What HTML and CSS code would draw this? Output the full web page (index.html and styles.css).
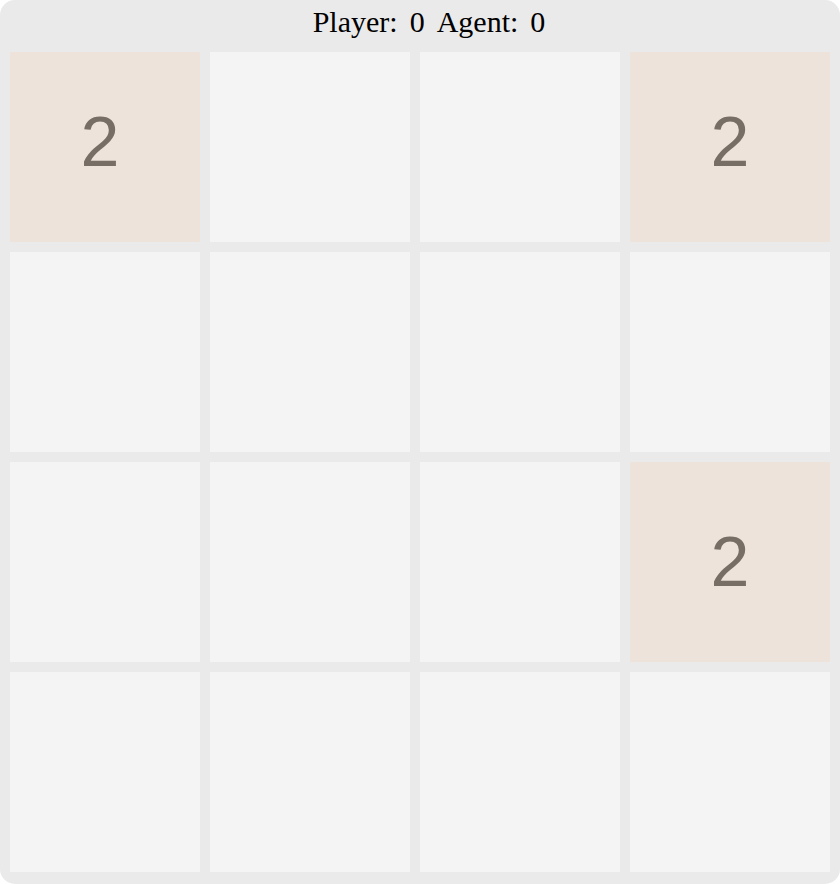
FILE: index.html
```html
<!DOCTYPE html>
<html>
<head>
<meta charset="utf-8">
<link rel="stylesheet" href="styles.css">
</head>
<body>
<div class="game">
  <div class="scores">
    <span>Player:</span><span>0</span><span>Agent:</span><span>0</span>
  </div>
  <div class="board">
    <div class="tile two first-col first-row">2</div>
    <div class="tile first-row"></div>
    <div class="tile first-row"></div>
    <div class="tile two first-row">2</div>

    <div class="tile first-col"></div>
    <div class="tile"></div>
    <div class="tile"></div>
    <div class="tile"></div>

    <div class="tile first-col"></div>
    <div class="tile"></div>
    <div class="tile"></div>
    <div class="tile two">2</div>

    <div class="tile first-col"></div>
    <div class="tile"></div>
    <div class="tile"></div>
    <div class="tile"></div>
  </div>
</div>
</body>
</html>
```
FILE: styles.css
```css
html, body {
  margin: 0;
  padding: 0;
  background: #ffffff;
}

.game {
  width: 840px;
  height: 884px;
  box-sizing: border-box;
  background: #eaeaea;
  border-radius: 15px;
  padding: 0 10px 12px 10px;
}

.scores {
  height: 42px;
  display: flex;
  justify-content: center;
  gap: 12px;
  padding-left: 18px;
  font-family: "Liberation Serif", "Times New Roman", serif;
  font-size: 30px;
  line-height: 44px;
  color: #000;
}

.board {
  display: grid;
  grid-template-columns: 190px 200px 200px 200px;
  grid-template-rows: 190px 200px 200px 200px;
  gap: 10px;
  margin-top: 10px;
}

.tile {
  background: #f4f4f4;
  box-sizing: border-box;
  display: flex;
  align-items: center;
  justify-content: center;
  font-family: "Liberation Sans", Arial, sans-serif;
  font-size: 70px;
  color: #776e65;
}

.tile.first-col {
  padding-right: 10px;
}

.tile.first-row {
  padding-bottom: 10px;
}

.tile.two {
  background: #ede3da;
}
```
